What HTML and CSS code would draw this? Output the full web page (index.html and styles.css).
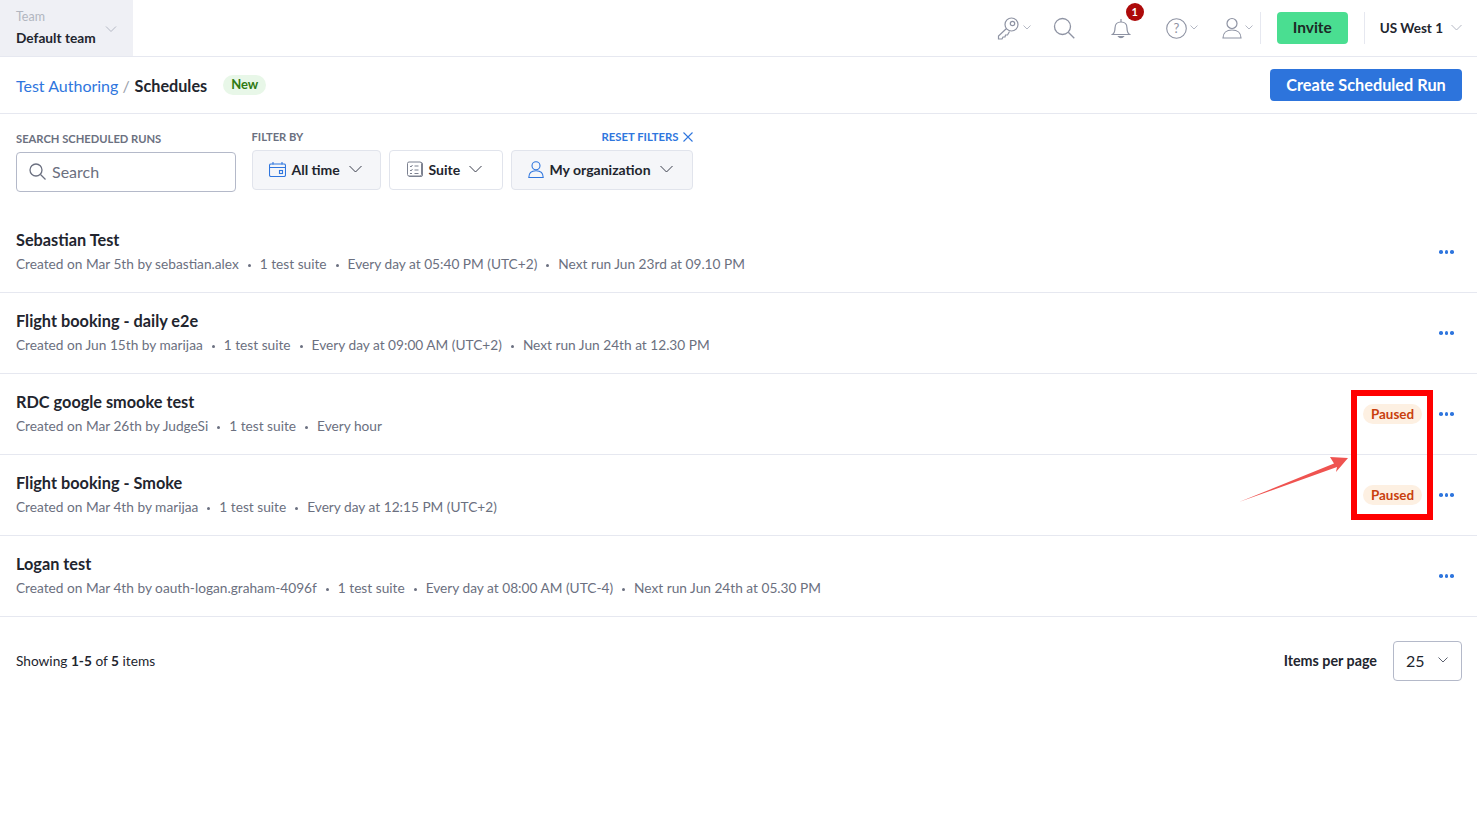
FILE: index.html
```html
<!DOCTYPE html>
<html lang="en">
<head>
  <meta charset="UTF-8" />
  <title>Schedules</title>
  <link rel="stylesheet" href="styles.css">
</head>
<body>

<!-- Header -->
<header class="topbar">
  <div class="team-box">
    <div>
      <div class="team-label">Team</div>
      <div class="team-name">Default team</div>
    </div>
    <svg class="team-caret" width="12" height="8" viewBox="0 0 12 8"><path d="M1 1.500l5 5 5-5" fill="none" stroke="#b4b8c4" stroke-width="1"/></svg>
  </div>
  <div class="topbar-right">
    <div class="icon-btn key-btn">
      <svg width="24" height="24" viewBox="0 0 24 24" fill="none" stroke="#8e93a3" stroke-width="1.200"><circle cx="15.500" cy="8.500" r="6.500"/><circle cx="16.500" cy="7.500" r="2.200"/><path d="M10.500 12.500l-8 7.500v3h3.500l1-2h2l.5-2h2l2-3.500"/></svg>
      <svg class="mini-caret" width="8" height="5" viewBox="0 0 8 5"><path d="M.5.5L4 4 7.500.5" fill="none" stroke="#b4b8c4"/></svg>
    </div>
    <div class="icon-btn search-btn">
      <svg width="22" height="22" viewBox="0 0 22 22" fill="none" stroke="#8e93a3" stroke-width="1.300"><circle cx="9.500" cy="9.500" r="8"/><path d="M15.300 15.300l6 6"/></svg>
    </div>
    <div class="icon-btn bell-btn">
      <svg width="20" height="22" viewBox="0 0 20 22" fill="none" stroke="#8e93a3" stroke-width="1.200"><path d="M1.500 17.500c2-1.500 2.500-3 2.500-6.500 0-3.500 2-6 6-6s6 2.500 6 6c0 3.500.5 5 2.500 6.500z"/><path d="M10 2v3"/><path d="M7.500 19.500c1 1.600 4 1.600 5 0z" fill="#8e93a3"/></svg>
      <span class="bell-badge">1</span>
    </div>
    <div class="icon-btn help-btn">
      <svg width="21" height="21" viewBox="0 0 21 21"><circle cx="10.500" cy="10.500" r="9.800" fill="none" stroke="#8e93a3" stroke-width="1.100"/><text x="10.500" y="15" text-anchor="middle" class="help-mark">?</text></svg>
      <svg class="mini-caret" width="8" height="5" viewBox="0 0 8 5"><path d="M.5.5L4 4 7.500.5" fill="none" stroke="#b4b8c4"/></svg>
    </div>
    <div class="icon-btn user-btn">
      <svg width="20" height="22" viewBox="0 0 20 22" fill="none" stroke="#8e93a3" stroke-width="1.200"><circle cx="10" cy="6.500" r="5"/><path d="M1 21c0-5 3.500-8 9-8s9 3 9 8z"/></svg>
      <svg class="mini-caret" width="8" height="5" viewBox="0 0 8 5"><path d="M.5.5L4 4 7.500.5" fill="none" stroke="#b4b8c4"/></svg>
    </div>
    <span class="divider"></span>
    <button class="btn-invite">Invite</button>
    <span class="divider"></span>
    <div class="region">US West 1
      <svg width="11" height="7" viewBox="0 0 11 7"><path d="M.5 1l5 5 5-5" fill="none" stroke="#b4b8c4"/></svg>
    </div>
  </div>
</header>

<div class="subheader">
  <div class="crumbs">
    <a href="#">Test Authoring</a><span class="slash">/</span><b>Schedules</b>
    <span class="new-tag">New</span>
  </div>
  <button class="btn-create">Create Scheduled Run</button>
</div>

<!-- Filters -->
<div class="filters">
  <div class="search-group">
    <div class="filter-label">SEARCH SCHEDULED RUNS</div>
    <div class="search-box">
      <svg width="17" height="17" viewBox="0 0 17 17" fill="none" stroke="#6b7080" stroke-width="1.300"><circle cx="7" cy="7" r="6"/><path d="M11.500 11.500l5 5"/></svg>
      Search
    </div>
  </div>
  <div class="filter-group">
    <div class="filter-top">
      <div class="filter-label">FILTER BY</div>
      <a class="reset" href="#">RESET FILTERS
        <svg width="10" height="10" viewBox="0 0 10 10"><path d="M.5.5l9 9m0-9l-9 9" stroke="#2f76de" stroke-width="1.100"/></svg>
      </a>
    </div>
    <div class="filter-row">
      <div class="filter-btn active all-time">
        <svg width="17" height="15" viewBox="0 0 17 15" fill="none" stroke="#2f76de" stroke-width="1.100"><rect x=".5" y="2" width="16" height="12.500" rx="1.500"/><path d="M.5 5.500h16M4 0v2.500M13 0v2.500"/><rect x="10.500" y="8.500" width="3" height="3"/></svg>
        All time
        <svg class="chev" width="13" height="8" viewBox="0 0 13 8"><path d="M.5 1l6 6 6-6" fill="none" stroke="#3a3f4c"/></svg>
      </div>
      <div class="filter-btn suite">
        <svg width="17" height="16" viewBox="0 0 17 16" fill="none" stroke="#7d8291"><rect x="2.500" y="1.500" width="14" height="14" rx="1.500" fill="#eceef2"/><rect x=".5" y=".5" width="14" height="14" rx="1.500" fill="#fff" transform="translate(1 0.500)"/><path d="M4 5l1 1 1.500-2M8.500 5h4M4 9l1 1 1.500-2M8.500 9h4M4 12.500h2M8.500 12.500h4"/></svg>
        Suite
        <svg class="chev" width="13" height="8" viewBox="0 0 13 8"><path d="M.5 1l6 6 6-6" fill="none" stroke="#3a3f4c"/></svg>
      </div>
      <div class="filter-btn active org">
        <svg width="16" height="17" viewBox="0 0 16 17" fill="none" stroke="#2f76de" stroke-width="1.100"><circle cx="8" cy="4.800" r="4"/><path d="M.8 16.500c0-4.500 2.700-6.800 7.200-6.800s7.200 2.300 7.200 6.800z"/></svg>
        My organization
        <svg class="chev" width="13" height="8" viewBox="0 0 13 8"><path d="M.5 1l6 6 6-6" fill="none" stroke="#3a3f4c"/></svg>
      </div>
    </div>
  </div>
</div>

<!-- Schedule list -->
<div class="run-list">
  <div class="run-row">
    <div>
      <div class="run-title">Sebastian Test</div>
      <div class="run-meta"><span>Created on Mar 5th by sebastian.alex</span><span>1 test suite</span><span>Every day at 05:40 PM (UTC+2)</span><span>Next run Jun 23rd at 09.10 PM</span></div>
    </div>
    <div class="run-actions"><span class="dots"><i></i><i></i><i></i></span></div>
  </div>
  <div class="run-row">
    <div>
      <div class="run-title">Flight booking - daily e2e</div>
      <div class="run-meta"><span>Created on Jun 15th by marijaa</span><span>1 test suite</span><span>Every day at 09:00 AM (UTC+2)</span><span>Next run Jun 24th at 12.30 PM</span></div>
    </div>
    <div class="run-actions"><span class="dots"><i></i><i></i><i></i></span></div>
  </div>
  <div class="run-row">
    <div>
      <div class="run-title">RDC google smooke test</div>
      <div class="run-meta"><span>Created on Mar 26th by JudgeSi</span><span>1 test suite</span><span>Every hour</span></div>
    </div>
    <div class="run-actions"><span class="paused">Paused</span><span class="dots"><i></i><i></i><i></i></span></div>
  </div>
  <div class="run-row">
    <div>
      <div class="run-title">Flight booking - Smoke</div>
      <div class="run-meta"><span>Created on Mar 4th by marijaa</span><span>1 test suite</span><span>Every day at 12:15 PM (UTC+2)</span></div>
    </div>
    <div class="run-actions"><span class="paused">Paused</span><span class="dots"><i></i><i></i><i></i></span></div>
  </div>
  <div class="run-row">
    <div>
      <div class="run-title">Logan test</div>
      <div class="run-meta"><span>Created on Mar 4th by oauth-logan.graham-4096f</span><span>1 test suite</span><span>Every day at 08:00 AM (UTC-4)</span><span>Next run Jun 24th at 05.30 PM</span></div>
    </div>
    <div class="run-actions"><span class="dots"><i></i><i></i><i></i></span></div>
  </div>
</div>

<div class="pager">
  <div class="showing">Showing <b>1-5</b> of <b>5</b> items</div>
  <div class="per-page">
    <span class="per-label">Items per page</span>
    <div class="per-select">25
      <svg width="10" height="6" viewBox="0 0 10 6"><path d="M.5.5L5 5 9.500.5" fill="none" stroke="#5d6270"/></svg>
    </div>
  </div>
</div>

<!-- Red annotation drawn on top of the screenshot -->
<div class="mark-box"></div>
<svg class="mark-arrow" width="112" height="50" viewBox="0 0 112 50"><path d="M1 48L96 9.500 92 3 110 4 98 18 99 13z" fill="#ef5350"/></svg>

</body>
</html>
```

FILE: styles.css
```css
body {
  font-family: 'Lato', 'Liberation Sans', sans-serif;
  margin: 0;
  background: #fff;
  color: #22252e;
  position: relative;
  height: 824px;
  overflow: hidden;
}

button {
  font-family: inherit;
  border: none;
  cursor: pointer;
}

/* Header */
.topbar {
  display: flex;
  justify-content: space-between;
  height: 56px;
  border-bottom: 1px solid #e6e8f0;
}

.team-box {
  width: 133px;
  box-sizing: border-box;
  padding: 10px 16px 0;
  background: #eff0f5;
  display: flex;
  justify-content: space-between;
}

.team-label {
  font-size: 12.500px;
  color: #b2b6c0;
  line-height: 14px;
}

.team-name {
  font-size: 13.700px;
  font-weight: 700;
  margin-top: 5px;
  line-height: 17px;
}

.team-caret {
  margin-top: 15px;
}

.topbar-right {
  display: flex;
  align-items: center;
  padding-right: 15px;
}

.icon-btn {
  display: flex;
  align-items: center;
  gap: 3px;
  position: relative;
}

.key-btn { margin-right: 22px; }
.search-btn { margin-right: 36px; }
.bell-btn { margin-right: 35px; }
.help-btn { margin-right: 24px; }
.user-btn { margin-right: 7px; }

.mini-caret {
  margin-top: -1px;
}

.help-mark {
  font-size: 13px;
  fill: #8e93a3;
}

.bell-badge {
  position: absolute;
  top: -14px;
  left: 15px;
  width: 18px;
  height: 18px;
  border-radius: 50%;
  background: #ad0a0a;
  color: #fff;
  font-size: 11px;
  font-weight: 700;
  text-align: center;
  line-height: 18px;
}

.divider {
  width: 1px;
  height: 32px;
  background: #e6e8f0;
}

.btn-invite {
  width: 71px;
  height: 32px;
  margin: 0 16px;
  padding: 0 0 2px;
  border-radius: 4px;
  background: #4ade91;
  color: #1c2a26;
  font-size: 15.500px;
  font-weight: 700;
}

.region {
  display: flex;
  align-items: center;
  gap: 8px;
  margin-left: 15px;
  padding-bottom: 1px;
  font-size: 13.500px;
  font-weight: 700;
}

.subheader {
  display: flex;
  justify-content: space-between;
  align-items: center;
  height: 56px;
  padding: 0 15px 0 16px;
  border-bottom: 1px solid #e6e8f0;
}

.crumbs {
  display: flex;
  align-items: center;
  font-size: 16px;
}

.crumbs a {
  color: #2f76de;
  text-decoration: none;
}

.crumbs b {
  font-weight: 700;
  font-size: 16.200px;
}

.slash {
  margin: 0 5px 0 4px;
  color: #9a9ea9;
}

.new-tag {
  margin-left: 16px;
  padding: 0 8px;
  height: 20px;
  line-height: 19px;
  border-radius: 10px;
  background: #e8f7e8;
  color: #2f7a12;
  font-size: 13px;
  font-weight: 700;
}

.btn-create {
  width: 192px;
  height: 32px;
  padding: 0 0 2px;
  border-radius: 4px;
  background: #2d74dc;
  color: #fff;
  font-size: 16.300px;
  font-weight: 700;
}

/* Filters */
.filters {
  display: flex;
  gap: 16px;
  padding: 17px 16px 0;
  height: 81px;
  box-sizing: border-box;
}

.search-group {
  padding-top: 1px;
}

.filter-label {
  font-size: 11.200px;
  font-weight: 700;
  color: #6b7080;
  line-height: 13px;
}

.filter-group {
  margin-top: -1px;
}

.search-box {
  display: flex;
  align-items: center;
  gap: 6px;
  width: 219.500px;
  height: 40px;
  margin-top: 7px;
  padding: 0 0 2px 12px;
  box-sizing: border-box;
  border: 1px solid #b4b9c9;
  border-radius: 4px;
  color: #6b7080;
  font-size: 16px;
}

.filter-top {
  display: flex;
  justify-content: space-between;
}

.reset {
  display: flex;
  align-items: center;
  gap: 4px;
  font-size: 11.300px;
  font-weight: 700;
  color: #2f76de;
  text-decoration: none;
}

.filter-row {
  display: flex;
  gap: 8px;
  margin-top: 7px;
}

.filter-btn {
  display: flex;
  align-items: center;
  gap: 6px;
  height: 40px;
  box-sizing: border-box;
  padding: 0 16px 2px;
  border: 1px solid #e1e4ec;
  border-radius: 4px;
  font-size: 14px;
  font-weight: 700;
}

.filter-btn .chev {
  margin-left: 3px;
}

.filter-btn.active {
  background: #f5f6f9;
}

.all-time { width: 129px; }
.suite { width: 114px; }
.org { width: 182px; }

/* Schedule list */
.run-list {
  margin-top: 17px;
}

.run-row {
  display: flex;
  justify-content: space-between;
  align-items: center;
  height: 80px;
  padding: 0 23.500px 0 16px;
  border-bottom: 1px solid #e6e8f0;
}

.run-title {
  font-size: 16.300px;
  font-weight: 700;
  line-height: 20px;
}

.run-meta {
  display: flex;
  margin-top: 4px;
  font-size: 13.700px;
  line-height: 20px;
  color: #6b7080;
}

.run-meta span + span::before {
  content: "";
  display: inline-block;
  width: 3px;
  height: 3px;
  margin: 0 9px;
  vertical-align: middle;
  border-radius: 50%;
  background: #6b7080;
}

.run-actions {
  display: flex;
  align-items: center;
  gap: 17px;
}

.paused {
  width: 59px;
  height: 20px;
  line-height: 20px;
  text-align: center;
  border-radius: 10px;
  background: #fdf0e2;
  color: #c9400e;
  font-size: 13.400px;
  font-weight: 700;
}

.dots {
  display: flex;
  gap: 2px;
}

.dots i {
  width: 3.500px;
  height: 3.500px;
  border-radius: 50%;
  background: #2f76de;
}

.pager {
  display: flex;
  justify-content: space-between;
  align-items: center;
  padding: 24px 15px 0 16px;
  font-size: 13.700px;
}

.showing {
  padding-bottom: 2px;
}

.per-page {
  display: flex;
  align-items: center;
  gap: 16px;
}

.per-label {
  padding-bottom: 2px;
  font-size: 14.300px;
  font-weight: 700;
}

.per-select {
  display: flex;
  align-items: center;
  justify-content: space-between;
  width: 69px;
  height: 40px;
  box-sizing: border-box;
  padding: 0 13px 2px 12px;
  border: 1px solid #b4b9c9;
  border-radius: 4px;
  font-size: 16px;
}

/* Annotation */
.mark-box {
  position: absolute;
  left: 1351px;
  top: 390px;
  width: 82px;
  height: 130px;
  box-sizing: border-box;
  border: 6px solid #ff0000;
}

.mark-arrow {
  position: absolute;
  left: 1238px;
  top: 454px;
}
```
